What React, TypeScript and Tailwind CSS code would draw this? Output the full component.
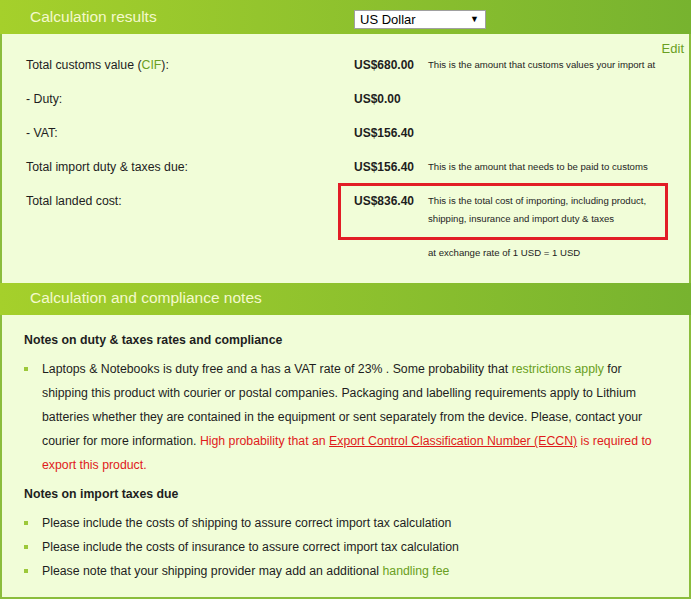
const rows = [
  { label: "- Duty:", value: "US$0.00", note: "" },
  { label: "- VAT:", value: "US$156.40", note: "" },
  {
    label: "Total import duty & taxes due:",
    value: "US$156.40",
    note: "This is the amount that needs to be paid to customs",
  },
];

const Bullet = ({ children }: { children: React.ReactNode }) => (
  <li className="relative pl-[18px]">
    <span className="absolute left-0 top-[10px] w-[4px] h-[4px] bg-[#9cc83a]" />
    {children}
  </li>
);

const Header = ({ title, tall, children }: { title: string; tall?: boolean; children?: React.ReactNode }) => (
  <div
    className={
      tall
        ? "flex items-start h-[34px] bg-gradient-to-r from-[#a5d02b] to-[#77b32f] pl-[30px] pt-[7px]"
        : "flex items-start h-[32px] bg-gradient-to-r from-[#a5d02b] to-[#77b32f] pl-[30px] pt-[5px]"
    }
  >
    <h2 className="w-[324px] leading-[20px] text-[15.5px] text-[#f4f9cc]">{title}</h2>
    {children}
  </div>
);

const App = () => {
  return (
    <div className="w-[691px] bg-[#f1fdd8] text-[#1e1e1e] font-['Liberation_Sans',Arial,sans-serif]">
      {/* Results */}
      <Header title="Calculation results" tall>
        <div className="mt-[3px] flex items-center justify-between w-[132px] h-[19px] bg-white border border-[#a0a0a0] pl-[5px] pr-[6px] text-[13px] text-black">
          <span>US Dollar</span>
          <span className="text-[9px]">▼</span>
        </div>
      </Header>
      <div className="border-x-2 border-[#8bbd3c] pt-[7px] pb-[21px] text-[12.3px]">
        <div className="text-right pr-[5px] leading-[15px] text-[13px] text-[#6a9f22]">Edit</div>
        <div className="pl-[24px]">
          <div className="flex h-[34px] leading-[18px]">
            <div className="w-[328px]">
              Total customs value (<span className="text-[#6a9f22]">CIF</span>):
            </div>
            <div className="w-[74px] font-bold text-[12px]">US$680.00</div>
            <div className="text-[9.6px]">This is the amount that customs values your import at</div>
          </div>
          {rows.map((r) => (
            <div key={r.label} className="flex h-[34px] leading-[18px]">
              <div className="w-[328px]">{r.label}</div>
              <div className="w-[74px] font-bold text-[12px]">{r.value}</div>
              <div className="text-[9.6px]">{r.note}</div>
            </div>
          ))}
          <div className="flex leading-[18px]">
            <div className="w-[328px]">Total landed cost:</div>
            <div className="relative flex">
              <div className="absolute -left-[16px] -top-[9px] w-[330px] h-[57px] border-[3px] border-[#e21d26]" />
              <div className="w-[74px] font-bold text-[12px]">US$836.40</div>
              <div className="w-[230px] text-[9.6px]">
                This is the total cost of importing, including product, shipping, insurance and import duty &amp; taxes
              </div>
            </div>
          </div>
          <div className="mt-[16px] pl-[402px] leading-[18px] text-[9.6px]">at exchange rate of 1 USD = 1 USD</div>
        </div>
      </div>

      {/* Notes */}
      <Header title="Calculation and compliance notes" />
      <div className="border-x-2 border-b-2 border-[#8bbd3c] pt-[16px] pb-[14px] pl-[22px] pr-[26px] text-[12.3px]">
        <h3 className="font-bold leading-[18px]">Notes on duty &amp; taxes rates and compliance</h3>
        <ul className="mt-[8px] leading-[24px]">
          <Bullet>
            Laptops &amp; Notebooks is duty free and a has a VAT rate of 23% . Some probability that{" "}
            <span className="text-[#6a9f22]">restrictions apply</span> for shipping this product with courier or
            postal companies. Packaging and labelling requirements apply to Lithium batteries whether they are
            contained in the equipment or sent separately from the device. Please, contact your courier for more
            information.{" "}
            <span className="text-[#e01b1b]">
              High probability that an <span className="underline">Export Control Classification Number (ECCN)</span>{" "}
              is required to export this product.
            </span>
          </Bullet>
        </ul>
        <h3 className="mt-[8px] font-bold leading-[18px]">Notes on import taxes due</h3>
        <ul className="mt-[8px] leading-[24px]">
          <Bullet>Please include the costs of shipping to assure correct import tax calculation</Bullet>
          <Bullet>Please include the costs of insurance to assure correct import tax calculation</Bullet>
          <Bullet>
            Please note that your shipping provider may add an additional{" "}
            <span className="text-[#6a9f22]">handling fee</span>
          </Bullet>
        </ul>
      </div>
    </div>
  );
};

export default App;
